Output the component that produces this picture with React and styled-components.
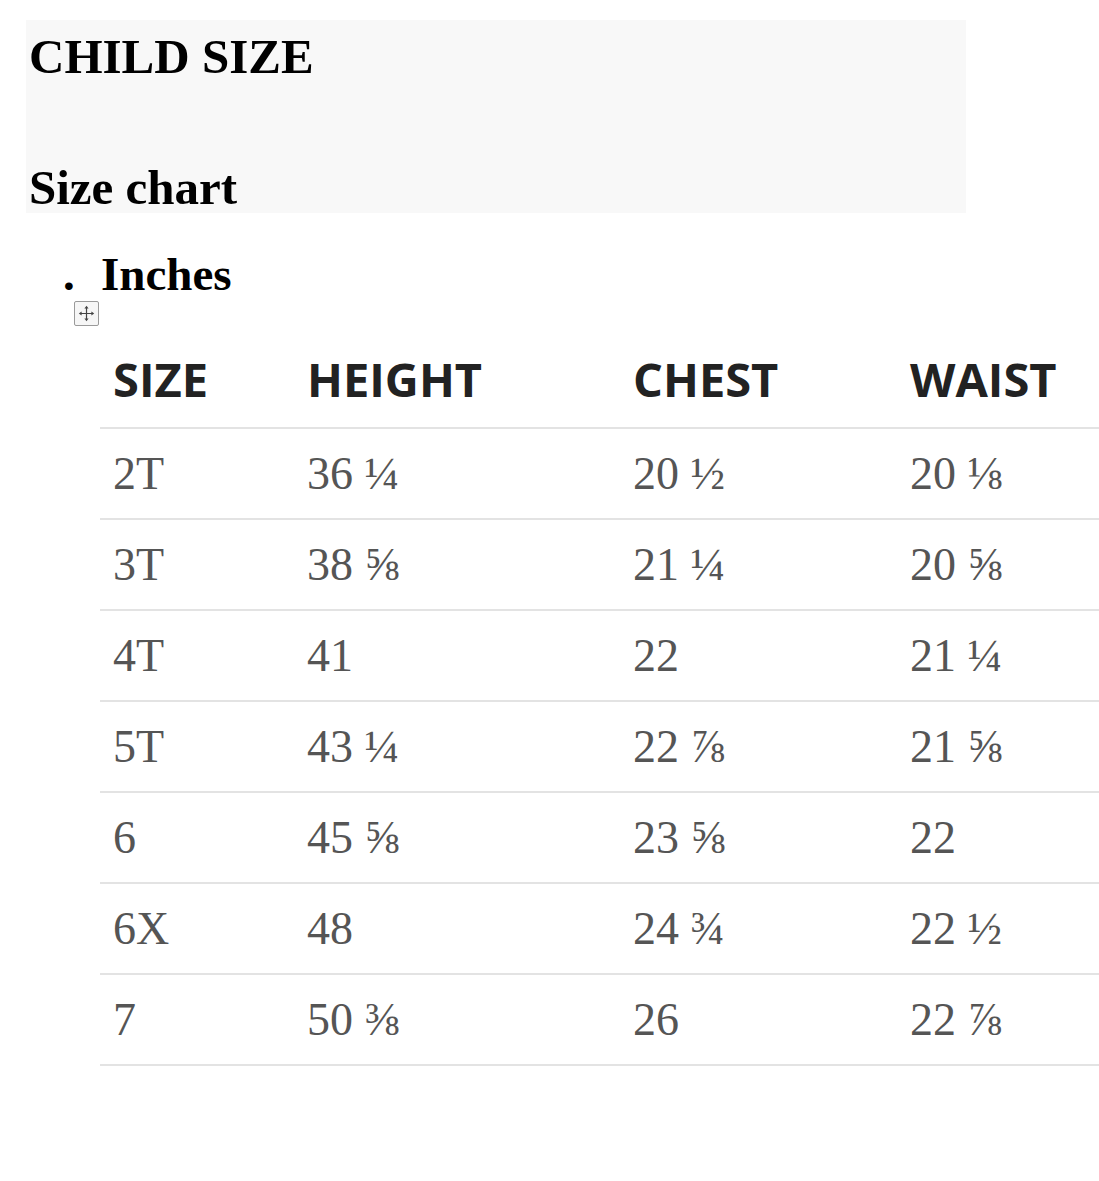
import React from "react";
import styled, { createGlobalStyle } from "styled-components";

const Global = createGlobalStyle`
  html, body { margin: 0; padding: 0; background: #ffffff; }
  body { overflow-x: hidden; font-family: "Liberation Serif", "Times New Roman", serif; }
`;

const Page = styled.div`
  padding: 20px 0 40px 26px;
`;

const TitleBox = styled.section`
  width: 940px;
  height: 193px;
  box-sizing: border-box;
  padding: 9px 3px 0;
  background: #f8f8f8;
`;

const Title = styled.h1`
  margin: 0;
  font-family: "Liberation Serif", "Times New Roman", serif;
  font-weight: 700;
  font-size: 49px;
  line-height: 56px;
  color: #000;
`;

const Subtitle = styled.h2`
  margin: 77px 0 0;
  font-family: "Liberation Serif", "Times New Roman", serif;
  font-weight: 700;
  font-size: 49px;
  line-height: 51px;
  color: #000;
`;

const UnitList = styled.ul`
  list-style: none;
  margin: 34px 0 0;
  padding: 0 0 0 37px;
`;

const UnitItem = styled.li`
  display: flex;
  font-family: "Liberation Serif", "Times New Roman", serif;
  font-weight: 700;
  font-size: 47px;
  line-height: 54px;
  color: #000;
`;

const Bullet = styled.span`
  width: 38px;
  flex: none;
`;

const MoveHandle = styled.div`
  margin-left: 48px;
  width: 25px;
  height: 25px;
  box-sizing: border-box;
  border: 1px solid #9a9a9a;
  border-radius: 2px;
  background: #f6f6f6;
  display: flex;
  align-items: center;
  justify-content: center;
`;

const TableWrap = styled.div`
  margin: 4px 0 0 74px;
`;

const Table = styled.table`
  width: 100%;
  table-layout: fixed;
  border-collapse: separate;
  border-spacing: 0;
`;

const Th = styled.th`
  text-align: left;
  padding: 17px 13px 16px;
  font-family: "Open Sans", "Liberation Sans", sans-serif;
  font-weight: 700;
  font-size: 47px;
  line-height: 64px;
  color: #222222;
  border-bottom: 2px solid #e3e3e3;
  white-space: nowrap;
`;

const Td = styled.td`
  padding: 0 13px;
  font-family: "Liberation Serif", "Times New Roman", serif;
  font-size: 46px;
  line-height: 89px;
  color: #555555;
  border-bottom: 2px solid #e3e3e3;
  white-space: nowrap;
`;

const columns = [
  { key: "size", label: "SIZE", width: 194 },
  { key: "height", label: "HEIGHT", width: 326 },
  { key: "chest", label: "CHEST", width: 277 },
  { key: "waist", label: "WAIST", width: 202 },
];

const rows = [
  ["2T", "36 ¼", "20 ½", "20 ⅛"],
  ["3T", "38 ⅝", "21 ¼", "20 ⅝"],
  ["4T", "41", "22", "21 ¼"],
  ["5T", "43 ¼", "22 ⅞", "21 ⅝"],
  ["6", "45 ⅝", "23 ⅝", "22"],
  ["6X", "48", "24 ¾", "22 ½"],
  ["7", "50 ⅜", "26", "22 ⅞"],
];

const MoveIcon = () => (
  <svg width="17" height="17" viewBox="0 0 17 17" fill="none">
    <path d="M8.5 2.5v12M2.5 8.5h12" stroke="#444" strokeWidth="1.2" />
    <path d="M8.5 0.8L6.4 3.6h4.2z" fill="#444" />
    <path d="M8.5 16.2L6.4 13.4h4.2z" fill="#444" />
    <path d="M0.8 8.5L3.6 6.4v4.2z" fill="#444" />
    <path d="M16.2 8.5L13.4 6.4v4.2z" fill="#444" />
  </svg>
);

export default function App() {
  return (
    <Page>
      <Global />
      <TitleBox>
        <Title>CHILD SIZE</Title>
        <Subtitle>Size chart</Subtitle>
      </TitleBox>
      <UnitList>
        <UnitItem>
          <Bullet>.</Bullet>
          Inches
        </UnitItem>
      </UnitList>
      <MoveHandle>
        <MoveIcon />
      </MoveHandle>
      <TableWrap>
        <Table>
          <colgroup>
            {columns.map((c, i) => (
              <col key={c.key} style={i < 3 ? { width: c.width } : undefined} />
            ))}
          </colgroup>
          <thead>
            <tr>
              {columns.map((c) => (
                <Th key={c.key}>{c.label}</Th>
              ))}
            </tr>
          </thead>
          <tbody>
            {rows.map((r) => (
              <tr key={r[0]}>
                {r.map((v, i) => (
                  <Td key={i}>{v}</Td>
                ))}
              </tr>
            ))}
          </tbody>
        </Table>
      </TableWrap>
    </Page>
  );
}
